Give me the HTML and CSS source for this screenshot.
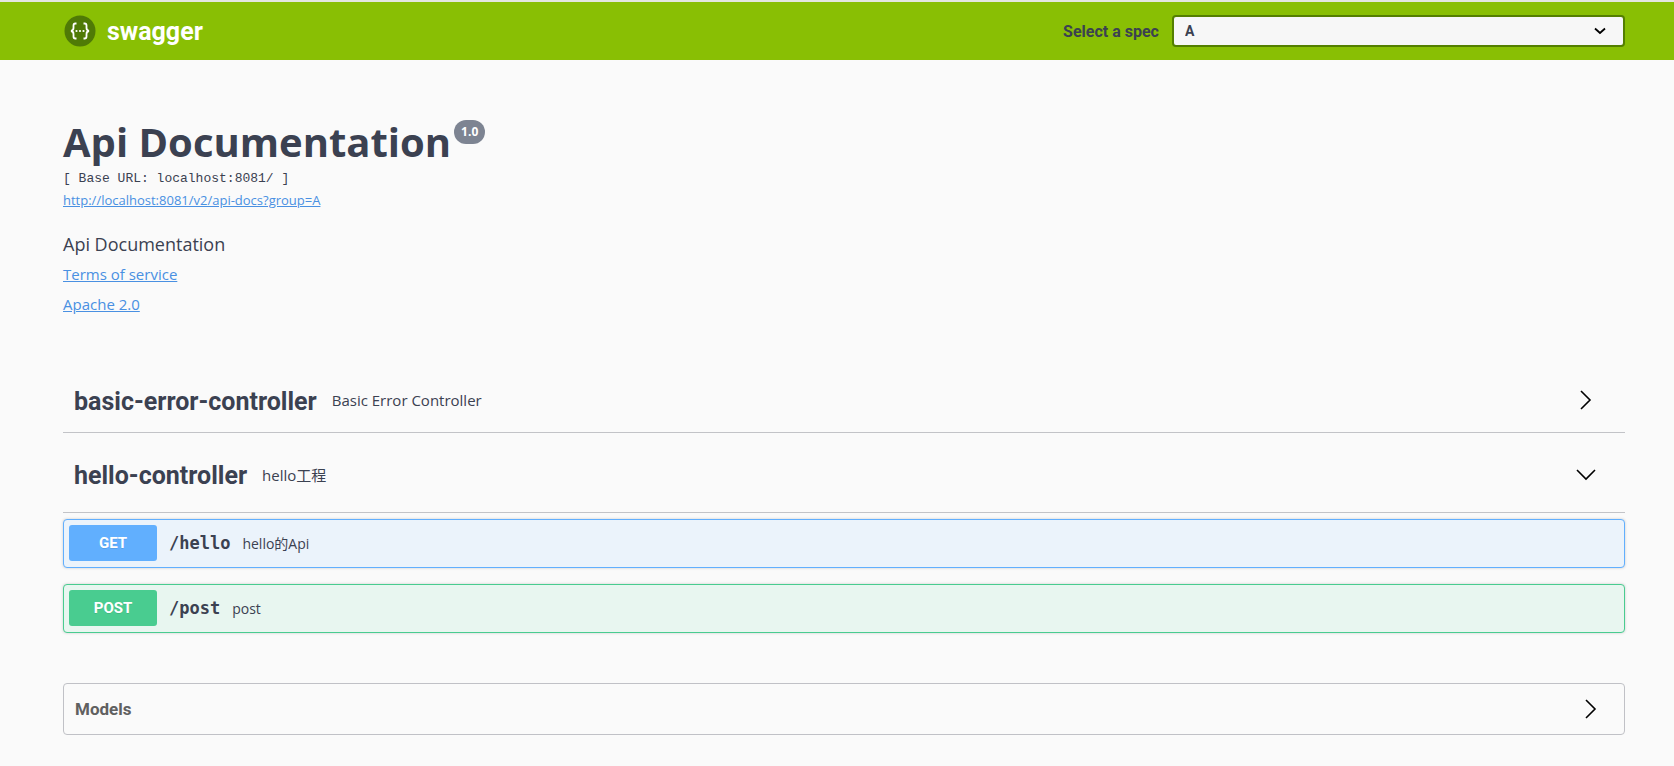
FILE: index.html
```html
<!DOCTYPE html>
<html lang="en">
<head>
    <meta charset="UTF-8">
    <meta name="viewport" content="width=device-width, initial-scale=1">
    <link rel="stylesheet" href="styles.css">
    <title>Swagger UI</title>
</head>

<body>
<header class="topbar">
    <a class="logo" href="#">
        <svg width="32" height="32" viewBox="0 0 32 32" aria-hidden="true">
            <circle cx="16" cy="16" r="15.5" fill="#4f7a06"/>
            <g fill="none" stroke="#fff" stroke-width="1.8">
                <path d="M12.5 8.5h-1.2c-1.3 0-1.8.8-1.8 2v2.6c0 1.8-.7 2.6-2.5 2.9 1.8.3 2.5 1.1 2.5 2.9v2.6c0 1.2.5 2 1.8 2h1.2"/>
                <path d="M19.5 8.5h1.2c1.3 0 1.8.8 1.8 2v2.6c0 1.8.7 2.6 2.5 2.9-1.8.3-2.5 1.1-2.5 2.9v2.6c0 1.2-.5 2-1.8 2h-1.2"/>
            </g>
            <g fill="#fff">
                <circle cx="12.5" cy="16" r="1.1"/>
                <circle cx="16" cy="16" r="1.1"/>
                <circle cx="19.5" cy="16" r="1.1"/>
            </g>
        </svg>
        <span>swagger</span>
    </a>
    <div class="spec-form">
        <label for="spec">Select a spec</label>
        <select id="spec">
            <option>A</option>
        </select>
    </div>
</header>

<main class="wrapper">
    <section class="info">
        <h1 class="title">Api Documentation <span class="version">1.0</span></h1>
        <div class="base-url">[ Base URL: localhost:8081/ ]</div>
        <a class="spec-link" href="http://localhost:8081/v2/api-docs?group=A">http://localhost:8081/v2/api-docs?group=A</a>
        <p class="description">Api Documentation</p>
        <a class="info-link" href="#">Terms of service</a>
        <a class="info-link" href="#">Apache 2.0</a>
    </section>

    <section>
        <div class="tag">
            <h2>basic-error-controller</h2>
            <small>Basic Error Controller</small>
            <button class="expand" aria-label="Expand operation">
                <svg width="20" height="20" viewBox="0 0 20 20"><path d="M5 1l9 9-9 9"/></svg>
            </button>
        </div>
    </section>

    <section>
        <div class="tag open">
            <h2>hello-controller</h2>
            <small>hello工程</small>
            <button class="expand" aria-label="Collapse operation">
                <svg width="20" height="20" viewBox="0 0 20 20"><path d="M1 6l9 9 9-9"/></svg>
            </button>
        </div>
        <div class="operations">
            <button class="opblock get">
                <span class="method">GET</span>
                <span class="path">/hello</span>
                <span class="summary">hello的Api</span>
            </button>
            <button class="opblock post">
                <span class="method">POST</span>
                <span class="path">/post</span>
                <span class="summary">post</span>
            </button>
        </div>
    </section>

    <section class="models">
        <h3>Models</h3>
        <button class="expand" aria-label="Expand models">
            <svg width="20" height="20" viewBox="0 0 20 20"><path d="M5 1l9 9-9 9"/></svg>
        </button>
    </section>
</main>
</body>
</html>
```
FILE: styles.css
```css
* {
    box-sizing: border-box;
}
body {
    margin: 0;
    background: #fafafa;
    color: #3b4151;
    font-family: "Open Sans", "Noto Sans CJK SC", sans-serif;
}
h1, h2, h3, p {
    margin: 0;
}
a {
    color: #4990e2;
}
button {
    font: inherit;
    color: inherit;
    cursor: pointer;
}

/* top bar */
.topbar {
    display: flex;
    align-items: center;
    justify-content: space-between;
    height: 60px;
    padding: 0 49px 0 64px;
    border-top: 2px solid #e4e6e0;
    background: #89bf04;
    font-family: Roboto, sans-serif;
    font-weight: bold;
}
.logo {
    display: flex;
    align-items: center;
    gap: 11px;
    color: #fff;
    font-size: 25px;
    text-decoration: none;
}
.spec-form {
    display: flex;
    align-items: center;
    gap: 13px;
    width: 36%;
}
.spec-form label {
    flex: none;
    font-size: 16px;
}
.spec-form select {
    flex: 1;
    height: 32px;
    padding: 0 40px 0 11px;
    border: 2px solid #547f00;
    border-radius: 4px;
    color: #3b4151;
    font-family: Roboto, sans-serif;
    font-size: 14px;
    font-weight: bold;
    appearance: none;
    background: #f7f7f7 url('data:image/svg+xml,<svg xmlns="http://www.w3.org/2000/svg" width="12" height="8" viewBox="0 0 12 8"><path d="M1 1.5l5 4.5 5-4.5" fill="none" stroke="black" stroke-width="1.8"/></svg>') right 17px center no-repeat;
}

.wrapper {
    padding: 0 49px 0 63px;
}

/* info */
.info {
    display: flex;
    flex-direction: column;
    align-items: flex-start;
    padding: 56px 0 49px;
}
.title {
    display: flex;
    align-items: flex-start;
    gap: 3px;
    font-size: 40px;
    line-height: 52px;
}
.version {
    margin-top: 4px;
    padding: 0 7px;
    border-radius: 24px;
    background: #7d8492;
    color: #fff;
    font-size: 12px;
    line-height: 24px;
}
.base-url {
    font-family: "Liberation Mono", monospace;
    font-size: 13px;
    line-height: 21px;
}
.spec-link {
    font-size: 13px;
    line-height: 22px;
}
.description {
    margin-top: 18px;
    font-size: 18px;
    line-height: 30px;
}
.info-link {
    font-size: 15px;
    line-height: 30px;
}

/* tags */
.tag {
    display: flex;
    align-items: center;
    gap: 15px;
    height: 65px;
    padding: 0 29px 0 11px;
    border-bottom: 1px solid #c2c3c7;
}
.tag h2 {
    padding-top: 3px;
    font-family: Roboto, sans-serif;
    font-size: 25px;
}
.tag small {
    flex: 1;
    font-size: 15px;
}
.tag.open {
    height: 77px;
    margin: 3px 0 6px;
}
.expand {
    display: flex;
    padding: 0;
    border: 0;
    background: none;
}
.expand path {
    fill: none;
    stroke: #000;
    stroke-width: 1.6;
}

/* operations */
.operations {
    display: flex;
    flex-direction: column;
    gap: 16px;
}
.opblock {
    display: flex;
    align-items: center;
    padding: 5px 5px 6px;
    border: 1px solid;
    border-radius: 4px;
    box-shadow: 0 0 3px rgba(0, 0, 0, .19);
}
.opblock.get {
    border-color: #61affe;
    background: #ebf3fb;
}
.opblock.post {
    border-color: #49cc90;
    background: #e8f6f0;
}
.method {
    width: 88px;
    border-radius: 3px;
    color: #fff;
    font-family: Roboto, sans-serif;
    font-size: 15px;
    font-weight: bold;
    line-height: 36px;
    text-align: center;
    text-shadow: 0 1px 0 rgba(0, 0, 0, .1);
}
.get .method {
    background: #61affe;
}
.post .method {
    background: #49cc90;
}
.path {
    padding: 0 12px;
    font-family: "DejaVu Sans Mono", monospace;
    font-size: 17px;
    font-weight: bold;
}
.summary {
    font-size: 14px;
}

/* models */
.models {
    display: flex;
    align-items: center;
    justify-content: space-between;
    height: 52px;
    margin: 50px 0 30px;
    padding: 0 23px 0 11px;
    border: 1px solid #c0c1c6;
    border-radius: 4px;
}
.models h3 {
    color: #606060;
    font-family: Roboto, sans-serif;
    font-size: 17px;
}
```
